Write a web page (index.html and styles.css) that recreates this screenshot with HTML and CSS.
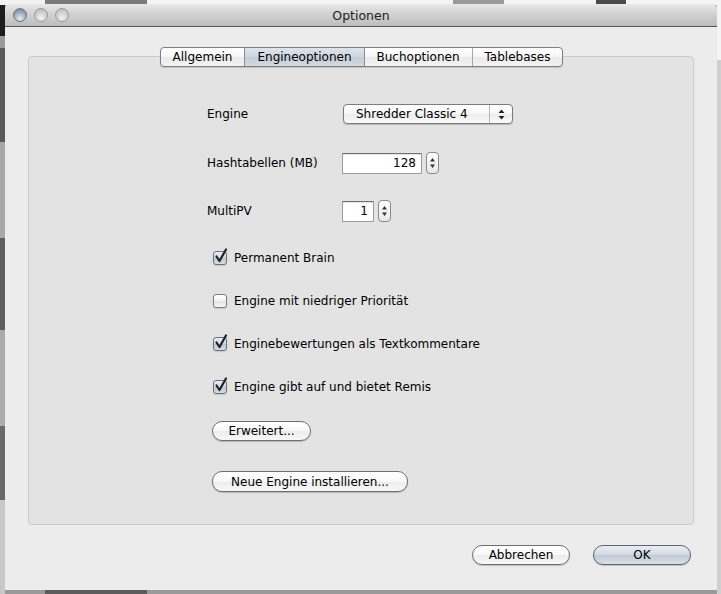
FILE: index.html
```html
<!DOCTYPE html>
<html>
<head>
<meta charset="utf-8">
<link rel="stylesheet" href="styles.css">
</head>
<body>
<div class="window">
  <div class="titlebar">
    <div class="lights">
      <span class="light close"></span>
      <span class="light"></span>
      <span class="light"></span>
    </div>
    <div class="title">Optionen</div>
  </div>
  <div class="wbody">
    <div class="tabs">
      <span class="tab">Allgemein</span><span class="tab sel">Engineoptionen</span><span class="tab">Buchoptionen</span><span class="tab">Tablebases</span>
    </div>
    <div class="group">
      <div class="row r1">
        <span class="label">Engine</span>
        <div class="popup">
          <span class="popup-text">Shredder Classic 4</span>
          <span class="popup-arrows">
            <svg width="7" height="11" viewBox="0 0 7 11"><path d="M3.5 0.5 L6.5 4 L0.5 4 Z M3.5 10.5 L6.5 7 L0.5 7 Z" fill="#222"/></svg>
          </span>
        </div>
      </div>
      <div class="row r2">
        <span class="label">Hashtabellen (MB)</span>
        <div class="field wide">128</div>
        <div class="stepper"><svg width="7" height="14" viewBox="0 0 7 14"><path d="M3.5 2 L6 5.5 L1 5.5 Z M3.5 12 L6 8.5 L1 8.5 Z" fill="#333"/></svg></div>
      </div>
      <div class="row r3">
        <span class="label">MultiPV</span>
        <div class="field narrow">1</div>
        <div class="stepper"><svg width="7" height="14" viewBox="0 0 7 14"><path d="M3.5 2 L6 5.5 L1 5.5 Z M3.5 12 L6 8.5 L1 8.5 Z" fill="#333"/></svg></div>
      </div>
      <div class="check first">
        <span class="box on"><svg class="tick" width="14" height="16" viewBox="0 0 14 16"><path d="M2.5 8.5 L5.5 13 L12 1.5" fill="none" stroke="#222" stroke-width="2.2" stroke-linejoin="round" stroke-linecap="round"/></svg></span>
        <span class="ctext">Permanent Brain</span>
      </div>
      <div class="check">
        <span class="box"></span>
        <span class="ctext">Engine mit niedriger Priorität</span>
      </div>
      <div class="check">
        <span class="box on"><svg class="tick" width="14" height="16" viewBox="0 0 14 16"><path d="M2.5 8.5 L5.5 13 L12 1.5" fill="none" stroke="#222" stroke-width="2.2" stroke-linejoin="round" stroke-linecap="round"/></svg></span>
        <span class="ctext">Enginebewertungen als Textkommentare</span>
      </div>
      <div class="check">
        <span class="box on"><svg class="tick" width="14" height="16" viewBox="0 0 14 16"><path d="M2.5 8.5 L5.5 13 L12 1.5" fill="none" stroke="#222" stroke-width="2.2" stroke-linejoin="round" stroke-linecap="round"/></svg></span>
        <span class="ctext">Engine gibt auf und bietet Remis</span>
      </div>
      <div class="btnrow b1"><button class="btn w-erw">Erweitert...</button></div>
      <div class="btnrow b2"><button class="btn w-neu">Neue Engine installieren...</button></div>
    </div>
    <div class="actions">
      <button class="btn w-act">Abbrechen</button>
      <button class="btn w-act default">OK</button>
    </div>
  </div>
</div>
</body>
</html>
```

FILE: styles.css
```css
html, body {
  margin: 0;
  padding: 0;
}
body {
  width: 721px;
  height: 594px;
  overflow: hidden;
  font-family: "DejaVu Sans", "Liberation Sans", sans-serif;
  font-size: 12px;
  color: #000;
  background:
    linear-gradient(to right, transparent 0, transparent 45px, #5c5c5c 45px, #5c5c5c 147px, transparent 147px) 0 590px / 721px 4px no-repeat,
    linear-gradient(to right, #f2f2f2 0, #f2f2f2 45px, #7a7a7a 45px, #7a7a7a 147px, #f4f4f4 147px, #f4f4f4 453px, #9a9a9a 453px, #9a9a9a 504px, #f4f4f4 504px, #f4f4f4 596px, #4a4a4a 596px, #4a4a4a 626px, #f4f4f4 626px) 0 0 / 721px 5px no-repeat,
    linear-gradient(to bottom, #1c1c1c 0, #1c1c1c 36px, #9a9a9a 36px, #9a9a9a 48px, #5a5a5a 48px, #5a5a5a 142px, #a8a8a8 142px, #a8a8a8 238px, #5e5e5e 238px, #5e5e5e 330px, #ababab 330px, #ababab 426px, #6a6a6a 426px, #6a6a6a 500px, #c8c8c8 500px) 0 0 / 5px 594px no-repeat,
    linear-gradient(to bottom, #f4f4f4 0, #f4f4f4 60px, #cfcfcf 60px) 717px 0 / 4px 594px no-repeat,
    #9a9a9a;
}
.window {
  margin: 4px 0 0 5px;
  width: 712px;
  height: 586px;
  background: #ececec;
  border-radius: 5px 5px 0 0;
  overflow: hidden;
  display: flex;
  flex-direction: column;
}
.titlebar {
  height: 22px;
  border-bottom: 1px solid #555;
  background: linear-gradient(to bottom, #e8e8e8 0%, #d2d2d2 45%, #bdbdbd 100%);
  display: flex;
  align-items: center;
  position: relative;
}
.lights {
  display: flex;
  gap: 7px;
  padding-left: 8px;
}
.light {
  width: 14px;
  height: 14px;
  border-radius: 50%;
  border: 1px solid #9a9a9a;
  background: radial-gradient(circle at 50% 75%, #f2f2f2 0%, #cfcfcf 55%, #b4b4b4 100%);
  box-sizing: border-box;
}
.light.close {
  border-color: #6d7684;
  background: radial-gradient(circle at 50% 80%, #e6ecf4 0%, #a4b0c0 50%, #6e7a8c 100%);
}
.title {
  position: absolute;
  left: 0;
  right: 0;
  top: 0;
  height: 22px;
  line-height: 23px;
  text-align: center;
  font-size: 12.5px;
  color: #222;
}
.wbody {
  flex: 1;
  display: flex;
  flex-direction: column;
}
.tabs {
  margin-top: 20px;
  align-self: center;
  display: flex;
  height: 20px;
  position: relative;
  z-index: 1;
  border: 1px solid #7f7f7f;
  border-radius: 4px;
  box-sizing: border-box;
  background: linear-gradient(to bottom, #ffffff 0%, #f6f6f6 50%, #eaeaea 51%, #f2f2f2 100%);
  box-shadow: 0 1px 1px rgba(0,0,0,0.15);
  overflow: hidden;
  margin-left: 1px;
}
.tab {
  padding: 0 12px;
  line-height: 18px;
  border-left: 1px solid #a8a8a8;
}
.tab:first-child {
  border-left: none;
}
.tab.sel {
  background: linear-gradient(to bottom, #dfe4ea 0%, #cdd5df 50%, #c3ccd7 51%, #d2d9e1 100%);
  border-left-color: #8e8e8e;
}
.tab.sel + .tab {
  border-left-color: #8e8e8e;
}
.group {
  margin: -11px 23px 0 23px;
  height: 469px;
  box-sizing: border-box;
  background: #e3e3e3;
  border: 1px solid #cbcbcb;
  border-radius: 4px;
  padding: 47px 0 0 177px;
  display: flex;
  flex-direction: column;
  align-items: flex-start;
}
.row {
  display: flex;
  align-items: center;
}
.r1 { height: 20px; }
.r2 { height: 22px; margin-top: 28px; }
.r3 { height: 22px; margin-top: 26px; }
.label {
  width: 136px;
  flex: none;
  padding-left: 1px;
  box-sizing: border-box;
}
.popup {
  width: 170px;
  height: 20px;
  box-sizing: border-box;
  border: 1px solid #7c7c7c;
  border-radius: 4px;
  background: linear-gradient(to bottom, #ffffff 0%, #f7f7f7 50%, #ececec 51%, #fafafa 100%);
  box-shadow: 0 1px 1px rgba(0,0,0,0.2);
  display: flex;
  align-items: center;
  margin-left: 1px;
}
.popup-text {
  flex: 1;
  padding-left: 12px;
  line-height: 18px;
}
.popup-arrows {
  width: 22px;
  height: 18px;
  border-left: 1px solid #b9b9b9;
  display: flex;
  align-items: center;
  justify-content: center;
}
.field {
  height: 21px;
  box-sizing: border-box;
  background: #fff;
  border: 1px solid #9c9c9c;
  border-top-color: #6f6f6f;
  box-shadow: inset 0 1px 1px rgba(0,0,0,0.12);
  text-align: right;
  line-height: 19px;
  padding-right: 5px;
}
.field.wide { width: 80px; }
.field.narrow { width: 32px; }
.stepper {
  margin-left: 4px;
  width: 13px;
  height: 22px;
  box-sizing: border-box;
  border: 1px solid #8a8a8a;
  border-radius: 4px;
  background: linear-gradient(to bottom, #ffffff, #e8e8e8);
  display: flex;
  align-items: center;
  justify-content: center;
}
.check {
  display: flex;
  align-items: center;
  height: 20px;
  margin-top: 23px;
  margin-left: 7px;
}
.check.first { margin-top: 26px; }
.box {
  width: 14px;
  height: 14px;
  box-sizing: border-box;
  border: 1px solid #7b7b7b;
  border-radius: 3px;
  background: linear-gradient(to bottom, #ffffff 0%, #f2f2f2 50%, #e4e4e4 51%, #f4f4f4 100%);
  box-shadow: 0 1px 1px rgba(0,0,0,0.12);
  position: relative;
  flex: none;
}
.box.on {
  background: linear-gradient(to bottom, #e8edf2 0%, #cfd7e0 50%, #bcc6d2 51%, #d6dde6 100%);
  border-color: #6a717b;
}
.tick {
  position: absolute;
  left: 0;
  top: -4px;
}
.ctext {
  margin-left: 7px;
}
.btnrow {
  margin-left: 6px;
}
.b1 { margin-top: 24px; }
.b2 { margin-top: 30px; }
.btn {
  font-family: inherit;
  font-size: 12px;
  color: #000;
  height: 20px;
  padding: 0;
  box-sizing: border-box;
  border: 1px solid #6f6f6f;
  border-radius: 10px;
  background: linear-gradient(to bottom, #ffffff 0%, #f8f8f8 50%, #ececec 51%, #f8f8f8 100%);
  box-shadow: 0 1px 1px rgba(0,0,0,0.2);
  text-align: center;
  line-height: 18px;
}
.w-erw { width: 99px; }
.w-neu { width: 196px; height: 21px; }
.actions {
  display: flex;
  justify-content: flex-end;
  gap: 23px;
  margin: 20px 26px 0 0;
}
.w-act { width: 98px; }
.btn.default {
  border-color: #5e6673;
  background: linear-gradient(to bottom, #e9edf2 0%, #d3d9e1 50%, #c0c9d4 51%, #d9dfe6 100%);
}
```
